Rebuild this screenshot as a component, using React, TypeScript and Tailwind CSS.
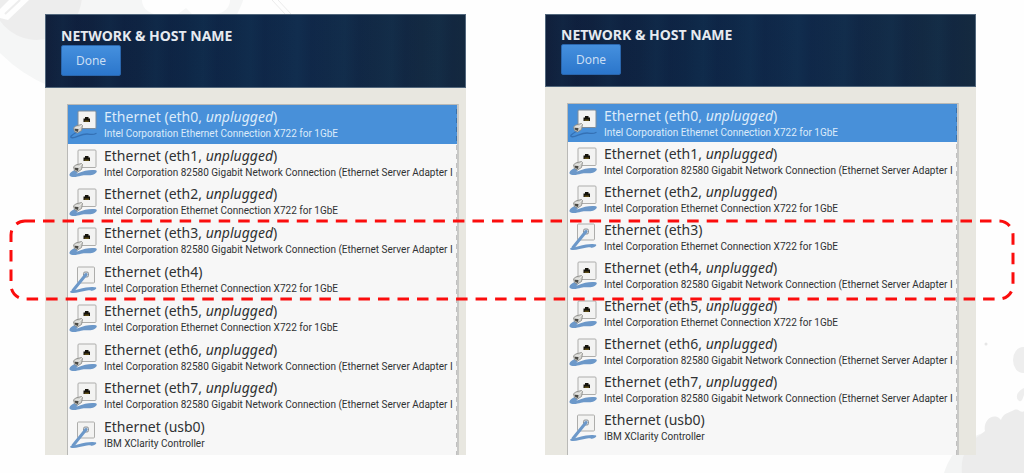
import React from 'react';

interface Device {
  name: string;
  vendor: string;
  unplugged?: boolean;
}

interface InstallerPanelProps {
  label: string;
  devices: Device[];
  headerClass: string;
  bodyClass: string;
  listClass: string;
}

const X722 = 'Intel Corporation Ethernet Connection X722 for 1GbE';
const I82580 = 'Intel Corporation 82580 Gigabit Network Connection (Ethernet Server Adapter I';

const before: Device[] = [
  { name: 'eth0', vendor: X722, unplugged: true },
  { name: 'eth1', vendor: I82580, unplugged: true },
  { name: 'eth2', vendor: X722, unplugged: true },
  { name: 'eth3', vendor: I82580, unplugged: true },
  { name: 'eth4', vendor: X722 },
  { name: 'eth5', vendor: X722, unplugged: true },
  { name: 'eth6', vendor: I82580, unplugged: true },
  { name: 'eth7', vendor: I82580, unplugged: true },
  { name: 'usb0', vendor: 'IBM XClarity Controller' },
];

const after: Device[] = [
  { name: 'eth0', vendor: X722, unplugged: true },
  { name: 'eth1', vendor: I82580, unplugged: true },
  { name: 'eth2', vendor: X722, unplugged: true },
  { name: 'eth3', vendor: X722 },
  { name: 'eth4', vendor: I82580, unplugged: true },
  { name: 'eth5', vendor: X722, unplugged: true },
  { name: 'eth6', vendor: I82580, unplugged: true },
  { name: 'eth7', vendor: I82580, unplugged: true },
  { name: 'usb0', vendor: 'IBM XClarity Controller' },
];

const PortIcon: React.FC<{ unplugged?: boolean; selected?: boolean }> = ({ unplugged, selected }) => {
  if (!unplugged) {
    return (
      <svg className="h-8 w-8 shrink-0" viewBox="0 0 32 32" fill="none" aria-hidden="true">
        <rect x="9.5" y="3" width="17" height="16" rx="1" fill="#f3f3f2" stroke="#adadab" />
        <rect x="15.5" y="8" width="5" height="5" rx="1.5" fill="#d5d9dd" stroke="#8f9499" />
        <path d="M18 10.5L5 26.5" stroke="#6c98c9" strokeWidth="3" strokeLinecap="round" />
        <path
          d="M3 27C8 26 13 24.300 18 23.500C22 22.800 26 22.800 28 23.500C29 24.500 27 26 25 26.500C21 27.500 25 25.500 19 26.500C13 27.500 7 29.500 3 28.700C1.500 28.300 2 27 3 27Z"
          fill="#6c98c9"
        />
      </svg>
    );
  }

  return (
    <svg className="h-8 w-8 shrink-0" viewBox="0 0 32 32" fill="none" aria-hidden="true">
      {selected ? (
        <path
          d="M8 24.500C4 27 1.500 29 3.500 29.700C8 30.500 12 26 19 26C23 26 24 27.500 28 25.500"
          stroke="#3470b4"
          strokeWidth="1.300"
          strokeLinecap="round"
        />
      ) : (
        <path
          d="M8 22.500C4 24 1 26.500 1.500 28.500C3.500 31 9 30 13 28.800C18 27.800 21 29 25 27.700C28 26.500 30 24.500 28 23.300C22 22.500 17 23.500 9 26.500C8 26.500 9 26 11 24Z"
          fill="#6c98c9"
        />
      )}
      <rect x="10" y="3" width="18" height="17.500" rx="1" fill="#f3f3f2" stroke={selected ? '#7e8c9a' : '#adadab'} />
      <path d="M15.500 14V10.500H17V9H20.500V10.500H22V14Z" fill="#14120b" />
      <path d="M16.500 12.500H21V14H16.500Z" fill="#5c4c16" />
      <path
        d="M5.500 20L7.500 18L13.500 16.500L14.500 17.500L13.500 22.500L9.500 25L6.500 23.500Z"
        fill="#d3d3cf"
        stroke="#858582"
        strokeWidth="0.800"
      />
      <path d="M6.500 20.800L10.500 21L10 24L7.300 23Z" fill="#4a4944" />
      <path d="M7.500 19.700L10.800 20L13.500 17.500" stroke="#f3f3f0" strokeWidth="0.800" />
    </svg>
  );
};

const DeviceRow: React.FC<{ device: Device; selected: boolean }> = ({ device, selected }) => (
  <li
    className={`flex min-h-0 flex-1 items-center ${
      selected ? 'bg-[#4890d9] text-[#dcebfa]' : 'text-[#303233]'
    }`}
  >
    <PortIcon unplugged={device.unplugged} selected={selected} />
    <div className="ml-1 whitespace-nowrap">
      <p className="text-[14px] leading-[18px]">
        Ethernet ({device.name}
        {device.unplugged && (
          <>
            , <em>unplugged</em>
          </>
        )}
        )
      </p>
      <p className="pt-px font-[Roboto,sans-serif] text-[10px] leading-[14px]">{device.vendor}</p>
    </div>
  </li>
);

const InstallerPanel: React.FC<InstallerPanelProps> = ({ label, devices, headerClass, bodyClass, listClass }) => (
  <section aria-label={label} className="flex min-w-0 flex-col bg-[#e8e7e0]">
    <header
      className={`flex flex-col items-start border border-[#52677c] bg-[repeating-linear-gradient(91deg,#17406000_0px,#17406028_17px,#0c1c4028_31px,#17406000_47px),linear-gradient(90deg,#101f3b,#0e2747_35%,#102a4b_60%,#14293f)] px-[15px] ${headerClass}`}
    >
      <h1 className="text-[14px] leading-[18px] font-bold text-[#e6eaf0]">NETWORK &amp; HOST NAME</h1>
      <button
        type="button"
        className="h-[31px] w-[60px] rounded-xs border border-[#2a66ad] bg-linear-to-b from-[#4590de] to-[#2b76cb] text-[12px] text-[#c9def4]"
      >
        Done
      </button>
    </header>
    <div className={`mt-4 ml-[22px] flex flex-1 bg-[#f7f7f7] ${bodyClass}`}>
      <ul
        className={`relative flex min-w-0 flex-1 flex-col border-t border-r-2 border-l border-[#b9b9b6] border-r-[#c9c9c7] ${listClass}`}
      >
        {devices.map((device, i) => (
          <DeviceRow key={device.name} device={device} selected={i === 0} />
        ))}
        <li
          aria-hidden="true"
          className="absolute inset-y-0 right-0 w-px bg-[repeating-linear-gradient(180deg,#00000000_0px,#00000000_4px,#00000038_4px,#00000038_9px)]"
        />
      </ul>
    </div>
  </section>
);

const Backdrop = () => (
  <>
    <svg className="absolute top-0 left-0 h-24 w-80" viewBox="0 0 320 96" fill="none" aria-hidden="true">
      <circle cx="105" cy="-50" r="147" fill="#f5f6f6" />
      <circle cx="37" cy="-5" r="45" fill="#ededed" />
      <path d="M0 9L9 0H29L8 20L0 18Z" fill="#fefefe" />
      <path d="M5 14L20 0" stroke="#ededed" strokeWidth="2" />
      <path d="M142 0H230C230 7 225 13 215 14H192L186 8L178 14H154C147 12 142 7 142 0Z" fill="#fefefe" />
      <path d="M272 0L285 14M278 0L291 14" stroke="#ebebeb" />
    </svg>
    <svg className="absolute right-0 bottom-0 h-44 w-28" viewBox="0 0 112 176" fill="none" aria-hidden="true">
      <path d="M32 176C39 154 54 139 76 135H112V176Z" fill="#f3f4f4" />
      <path
        d="M50 176C48 160 56 145 68 138L73 134C71 125 79 116 87 121L89 123C91 116 97 116 102 113C107 111 109 117 112 114V176Z"
        fill="#ececec"
      />
      <ellipse cx="111" cy="63" rx="10" ry="13" fill="#eeeeee" />
      <path d="M112 91C106 94 103 99 106 103C110 107 111 100 112 98Z" fill="#eeeeee" />
      <circle cx="74" cy="47" r="1.500" fill="#e6e6e6" />
    </svg>
  </>
);

export default function App() {
  return (
    <main className="relative overflow-hidden bg-[#fefefe] pt-[14px] pr-12 pb-[18px] pl-[45px] font-['Noto_Sans','Open_Sans',sans-serif]">
      <Backdrop />
      <div className="relative grid grid-cols-[421fr_431fr] gap-[79px]">
        <InstallerPanel
          label="Before"
          devices={before}
          headerClass="h-[74px] pt-3"
          bodyClass="mr-[7px]"
          listClass="h-[351px] pb-px"
        />
        <InstallerPanel
          label="After"
          devices={after}
          headerClass="h-[73px] pt-[11px]"
          bodyClass="mr-[17px]"
          listClass="h-[352px] pb-2"
        />
      </div>
      <div className="pointer-events-none absolute inset-x-[11px] top-[221px] h-[78px]">
        <svg className="h-full w-full overflow-visible" fill="none" aria-hidden="true">
          <rect
            width="100%"
            height="100%"
            rx="14"
            stroke="#fb0d0d"
            strokeWidth="3"
            strokeDasharray="11.5 8.020"
            strokeDashoffset="1.500"
          />
        </svg>
      </div>
    </main>
  );
}
